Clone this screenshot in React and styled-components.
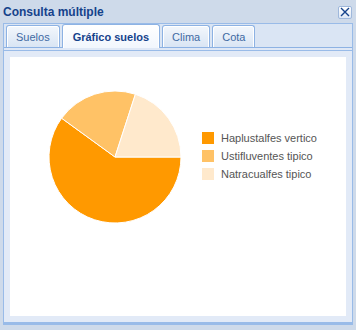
import React, { useState } from 'react';
import styled, { createGlobalStyle } from 'styled-components';

const GlobalStyle = createGlobalStyle`
    html, body {
        margin: 0;
        padding: 0;
        background: #cedaea;
    }
`;

const tabs = ['Suelos', 'Gráfico suelos', 'Clima', 'Cota'];

const series = [
    { label: 'Haplustalfes vertico', value: 60, color: '#ff9900' },
    { label: 'Ustifluventes tipico', value: 20, color: '#ffc266' },
    { label: 'Natracualfes tipico', value: 20, color: '#ffe9cc' }
];

const R = 66;

const slicePath = (start, end) => {
    const a0 = (start * Math.PI) / 180;
    const a1 = (end * Math.PI) / 180;
    const x0 = R + R * Math.cos(a0);
    const y0 = R + R * Math.sin(a0);
    const x1 = R + R * Math.cos(a1);
    const y1 = R + R * Math.sin(a1);
    const large = end - start > 180 ? 1 : 0;
    return `M${R} ${R} L${x0.toFixed(2)} ${y0.toFixed(2)} A${R} ${R} 0 ${large} 1 ${x1.toFixed(2)} ${y1.toFixed(2)} Z`;
};

const Pie = () => {
    const total = series.reduce((s, d) => s + d.value, 0);
    let angle = 0;
    return (
        <svg width={R * 2} height={R * 2} viewBox={`0 0 ${R * 2} ${R * 2}`}>
            {series.map((d) => {
                const start = angle;
                angle += (d.value / total) * 360;
                return <path key={d.label} d={slicePath(start, angle)} fill={d.color} stroke="#fff" strokeWidth="1" />;
            })}
        </svg>
    );
};

const App = () => {
    const [active, setActive] = useState(1);

    return (
        <>
            <GlobalStyle />
            <Window>
                <Header>
                    <Title>Consulta múltiple</Title>
                    <Close>
                        <svg width="10" height="10" viewBox="0 0 10 10">
                            <path d="M1 1 L9 9 M9 1 L1 9" stroke="#15428b" strokeWidth="1.4" />
                        </svg>
                    </Close>
                </Header>
                <Panel>
                    <TabStrip>
                        {tabs.map((t, i) => (
                            <Tab key={t} $active={i === active} onClick={() => setActive(i)}>
                                {t}
                            </Tab>
                        ))}
                    </TabStrip>
                    <Body>
                        <Sheet>
                            <Chart>
                                <Pie />
                                <Legend>
                                    {series.map((d) => (
                                        <LegendRow key={d.label}>
                                            <Swatch $color={d.color} />
                                            <span>{d.label}</span>
                                        </LegendRow>
                                    ))}
                                </Legend>
                            </Chart>
                        </Sheet>
                    </Body>
                </Panel>
            </Window>
        </>
    );
};
export default App;

const Window = styled.div`
    width: 356px;
    height: 330px;
    box-sizing: border-box;
    padding: 0 3px 5px 3px;
    display: flex;
    flex-direction: column;
    background: #cedaea;
`;

const Header = styled.div`
    height: 23px;
    display: flex;
    flex-direction: row;
    align-items: center;
    justify-content: space-between;
    padding: 0 1px 0 0;
`;

const Title = styled.div`
    font-family: 'Liberation Sans', Arial, sans-serif;
    font-weight: bold;
    font-size: 12px;
    color: #15428b;
    margin-top: 1px;
`;

const Close = styled.div`
    width: 14px;
    height: 13px;
    box-sizing: border-box;
    border: 1px solid #9fb8dc;
    border-radius: 2px;
    background: linear-gradient(#ffffff, #dde7f5);
    display: flex;
    align-items: center;
    justify-content: center;
    margin-top: 1px;
`;

const Panel = styled.div`
    flex: 1;
    display: flex;
    flex-direction: column;
    border: 1px solid #99bbe8;
    border-bottom-width: 3px;
    background: #dfe8f6;
`;

const TabStrip = styled.div`
    height: 23px;
    display: flex;
    flex-direction: row;
    align-items: flex-end;
    gap: 2px;
    padding-left: 2px;
    border-bottom: 1px solid #8db2e3;
    background: #dae5f4;
`;

const Tab = styled.div`
    height: ${(p) => (p.$active ? '24px' : '22px')};
    box-sizing: border-box;
    padding: 0 ${(p) => (p.$active ? '10px' : '9px')};
    margin-bottom: ${(p) => (p.$active ? '-1px' : '0')};
    display: flex;
    align-items: center;
    border: 1px solid #8db2e3;
    border-bottom: none;
    border-radius: 3px 3px 0 0;
    box-shadow: inset 1px 1px 0 #fff, inset -1px 0 0 #fff;
    background: ${(p) => (p.$active ? 'linear-gradient(#ffffff, #f1f6fd)' : 'linear-gradient(#f3f7fc, #d9e5f4)')};
    font-family: 'Liberation Sans', Tahoma, sans-serif;
    font-size: 11px;
    font-weight: ${(p) => (p.$active ? 'bold' : 'normal')};
    color: ${(p) => (p.$active ? '#15428b' : '#416aa3')};
    cursor: pointer;
`;

const Body = styled.div`
    flex: 1;
    display: flex;
    margin-top: 2px;
    padding: 6px;
    border-top: 1px solid #99bbe8;
    background: #e2eaf7;
`;

const Sheet = styled.div`
    flex: 1;
    background: #ffffff;
`;

const Chart = styled.div`
    display: flex;
    flex-direction: row;
    align-items: flex-start;
    gap: 21px;
    padding: 34px 0 0 39px;
`;

const Legend = styled.div`
    display: flex;
    flex-direction: column;
    gap: 6px;
    margin-top: 41px;
`;

const LegendRow = styled.div`
    display: flex;
    flex-direction: row;
    align-items: center;
    gap: 7px;
    height: 12px;
    font-family: 'Liberation Sans', Arial, sans-serif;
    font-size: 11px;
    color: #555555;
`;

const Swatch = styled.div`
    width: 12px;
    height: 12px;
    background: ${(p) => p.$color};
`;
